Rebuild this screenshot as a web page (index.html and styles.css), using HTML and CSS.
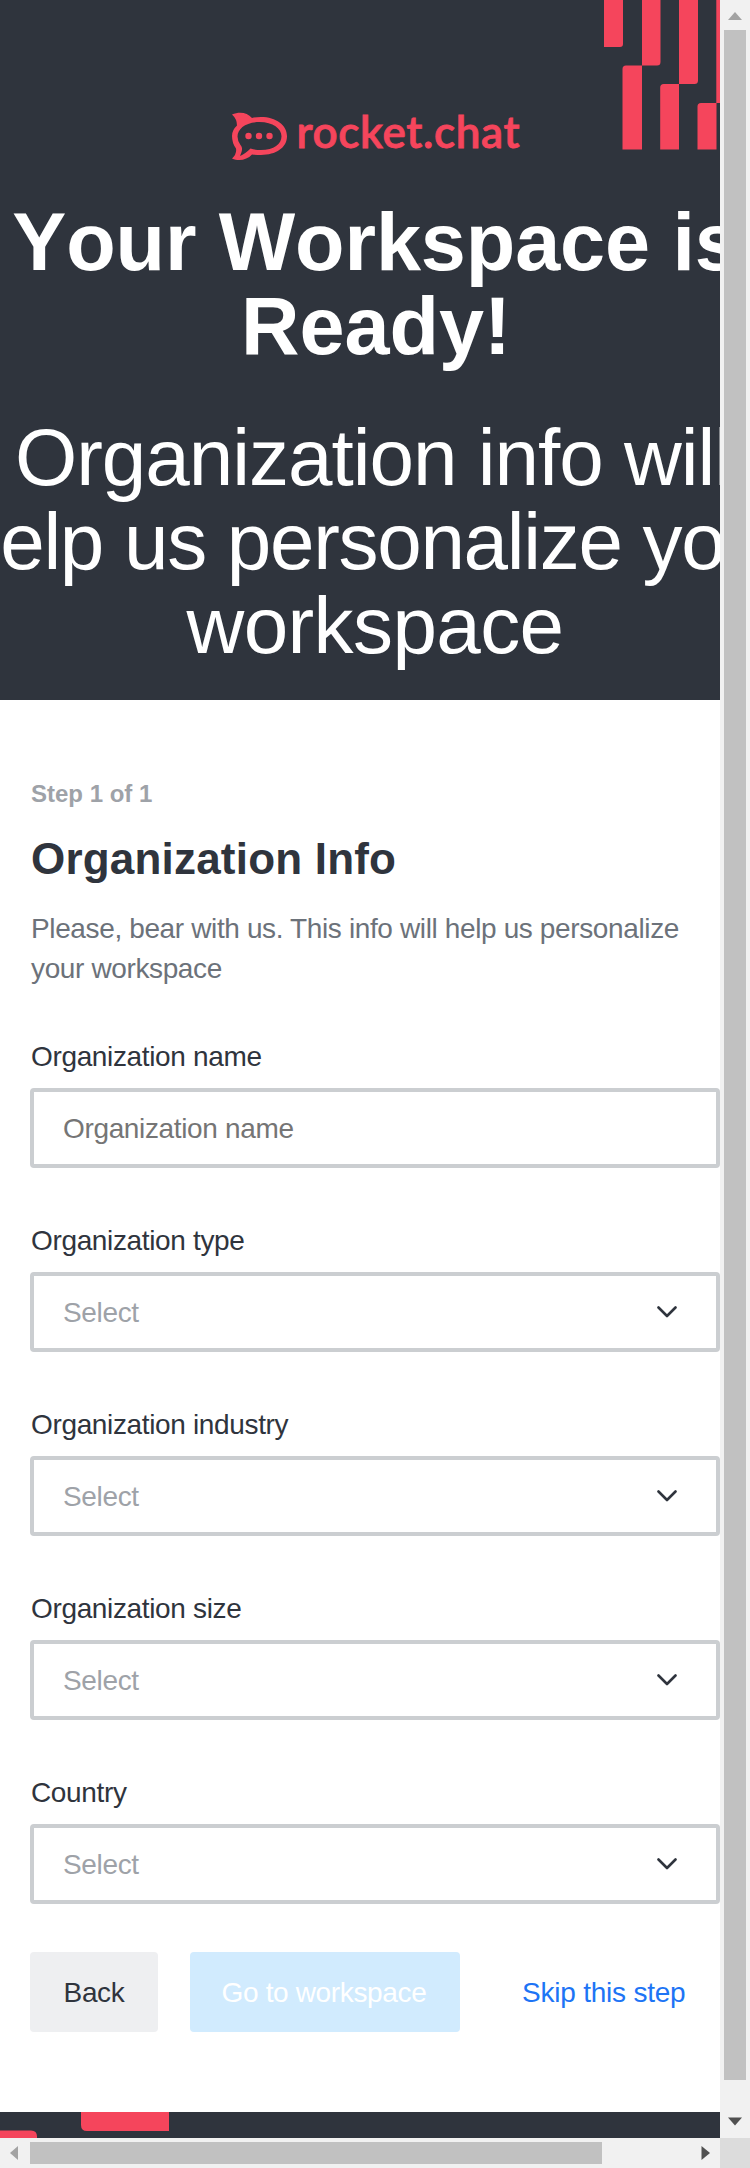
FILE: index.html
```html
<!DOCTYPE html>
<html lang="en">
<head>
<meta charset="utf-8">
<title>Organization Info</title>
<link rel="stylesheet" href="styles.css">
</head>
<body>
<div class="window">
  <div class="view">
    <header class="hero">
      <svg class="bars" width="116" height="150" viewBox="0 0 116 150" fill="#f5455c">
        <path d="M0 0h19v44q0 3-3 3H0zM38 0h18.500v62q0 3.500-3.500 3.500H38zM75 0h19v80.500q0 3.500-3.500 3.500H75zM112.300 0H116v103h-3.700z"/>
        <path d="M18.500 149.500V69q0-3.500 3.500-3.500h16v84zM56.200 149.500V87.500q0-3.500 3.500-3.500H75v65.500zM93.500 149.500v-43q0-3.500 3.500-3.500h15.500v46.500z"/>
      </svg>
      <svg class="logo" width="290" height="54" viewBox="0 0 290 54" fill="#f5455c">
        <path fill-rule="evenodd" d="M0 2.500C7-.5 15 0 20 6Q23 5 29 5C44 5 55 13 55 24.300S44 43 29 43Q24 43 20 42.500C15 48 7 49.500 0 46.500Q5 42 4 36.500Q0 31 0 24Q0 18 5 13.500Q5 7 0 2.500ZM27.500 10C14 10 5.500 16.500 5.500 24.500Q5.500 29 8.500 33C11.500 36.500 9.500 40 8 44Q13 42 18.500 36.500Q23 38 29 38C42 38 49.500 32 49.500 24.300S41 10 27.500 10Z"/>
        <circle cx="16.500" cy="24" r="3.200"/><circle cx="27" cy="24" r="3.200"/><circle cx="37.500" cy="24" r="3.200"/>
        <text class="wordmark" x="64.500" y="35.500" textLength="223">rocket.chat</text>
      </svg>
      <h1 class="headline"><span class="h1a">Your Workspace is</span><span class="h1b">Ready!</span></h1>
      <p class="tagline"><span class="t1">Organization info will</span><span class="t2">help us personalize your</span><span class="t3">workspace</span></p>
    </header>
    <main class="form">
      <div class="step">Step 1 of 1</div>
      <h2 class="title">Organization Info</h2>
      <p class="intro">Please, bear with us. This info will help us personalize<br>your workspace</p>
      <div class="field"><label class="label">Organization name</label><div class="box"><span class="hint">Organization name</span></div></div>
      <div class="field"><label class="label">Organization type</label><div class="box"><span>Select</span><svg class="chev" width="20" height="12" viewBox="0 0 20 12"><path d="M1.500 1.500 10 10l8.500-8.500"/></svg></div></div>
      <div class="field"><label class="label">Organization industry</label><div class="box"><span>Select</span><svg class="chev" width="20" height="12" viewBox="0 0 20 12"><path d="M1.500 1.500 10 10l8.500-8.500"/></svg></div></div>
      <div class="field"><label class="label">Organization size</label><div class="box"><span>Select</span><svg class="chev" width="20" height="12" viewBox="0 0 20 12"><path d="M1.500 1.500 10 10l8.500-8.500"/></svg></div></div>
      <div class="field"><label class="label">Country</label><div class="box"><span>Select</span><svg class="chev" width="20" height="12" viewBox="0 0 20 12"><path d="M1.500 1.500 10 10l8.500-8.500"/></svg></div></div>
      <div class="actions"><div class="btn back">Back</div><div class="btn go">Go to workspace</div><div class="skip">Skip this step</div></div>
    </main>
    <footer class="foot">
      <svg width="180" height="26" viewBox="0 0 180 26" fill="#f5455c"><path d="M81 0h88v19H87q-6 0-6-6zM0 18.500h31q6 0 6 6V26H0z"/></svg>
    </footer>
  </div>
  <div class="vbar">
    <svg width="30" height="30" viewBox="0 0 30 30"><path d="M15 12l7 8H8z" fill="#a3a3a3"/></svg>
    <div class="vthumb"></div>
    <svg class="down" width="30" height="30" viewBox="0 0 30 30"><path d="M8 9.500h14L15 17.500z" fill="#505050"/></svg>
  </div>
  <div class="hbar">
    <svg width="30" height="30" viewBox="0 0 30 30"><path d="M10 15l8-7v14z" fill="#a3a3a3"/></svg>
    <div class="hthumb"></div>
    <svg class="right" width="30" height="30" viewBox="0 0 30 30"><path d="M11.500 8l8.500 7-8.500 7z" fill="#505050"/></svg>
  </div>
  <div class="corner"></div>
</div>
</body>
</html>
```

FILE: styles.css
```css
* { box-sizing: border-box; }
body { margin: 0; font-family: "Liberation Sans", Arial, sans-serif; color: #2f343d; background: #fff; }
.window { display: grid; grid-template-columns: 720px 30px; grid-template-rows: 2138px 30px; width: 750px; height: 2168px; overflow: hidden; }
.view { display: flex; flex-direction: column; width: 720px; height: 2138px; overflow: hidden; }
.hero { position: relative; height: 700px; padding-top: 112px; background: #2f343d; color: #fff; overflow: hidden; }
.bars { position: absolute; top: 0; right: 0; }
.logo { display: block; margin-left: 232px; overflow: visible; }
.wordmark { font-family: Lato, sans-serif; font-size: 44px; font-weight: 600; stroke: #f5455c; stroke-width: 0.8; }
.headline { display: flex; flex-direction: column; align-items: center; width: 752px; margin: 34px 0 0; font-size: 81px; line-height: 84px; font-weight: 700; white-space: nowrap; }
.h1a { letter-spacing: -0.100px; font-kerning: none; }
.h1b { letter-spacing: 0; }
.tagline { display: flex; flex-direction: column; align-items: center; width: 750px; margin: 48px 0 0; font-size: 80px; line-height: 84px; white-space: nowrap; }
.t1 { letter-spacing: -1px; padding-right: 4px; }
.t2 { letter-spacing: -1.300px; }
.t3 { letter-spacing: -0.600px; }
.form { height: 1412px; padding: 78px 0 0 30px; background: #fff; }
.step { padding-left: 1px; font-size: 24px; line-height: 32px; font-weight: 700; color: #9ea2a8; }
.title { margin: 19px 0; padding-left: 1px; font-size: 44px; line-height: 60px; font-weight: 700; letter-spacing: 0.2px; }
.intro { margin: 1px 0 47px; font-size: 28px; line-height: 40px; color: #6c727a; letter-spacing: -0.370px; white-space: nowrap; padding-left: 1px; }
.title + .intro { margin-top: 20px; }
.field { margin-bottom: 52px; height: 132px; font-size: 28px; line-height: 40px; letter-spacing: -0.350px; }
.label { display: block; padding: 1px 0 0 1px; margin-bottom: 11px; }
.box { display: flex; align-items: center; justify-content: space-between; height: 80px; padding: 0 39px 0 29px; border: 4px solid #cbced1; border-radius: 4px; color: #9ea2a8; }
.box span { padding-top: 2px; }
.box .hint { color: #757575; }
.chev { fill: none; stroke: #2f343d; stroke-width: 2.600; stroke-linecap: round; stroke-linejoin: round; }
.actions { display: flex; align-items: center; margin-top: -4px; font-size: 28px; letter-spacing: -0.350px; white-space: nowrap; }
.btn { display: flex; align-items: center; justify-content: center; height: 80px; padding-top: 2px; border-radius: 4px; }
.back { width: 128px; margin-right: 32px; background: #eeeff1; }
.go { width: 270px; padding-right: 2px; background: #d1ebfe; color: #fff; }
.skip { margin-left: 62px; padding-top: 2px; color: #1d74f5; letter-spacing: -0.220px; }
.foot { height: 26px; background: #2f343d; }
.foot svg { display: block; }
.vbar { display: flex; flex-direction: column; align-items: center; background: #f1f1f1; }
.vthumb { width: 22px; height: 2050px; background: #c1c1c1; }
.down { margin-top: 28px; }
.hbar { display: flex; align-items: center; background: #f1f1f1; }
.hthumb { width: 572px; height: 22px; background: #c1c1c1; }
.right { margin-left: 88px; }
.corner { background: #dcdcdc; }
```
